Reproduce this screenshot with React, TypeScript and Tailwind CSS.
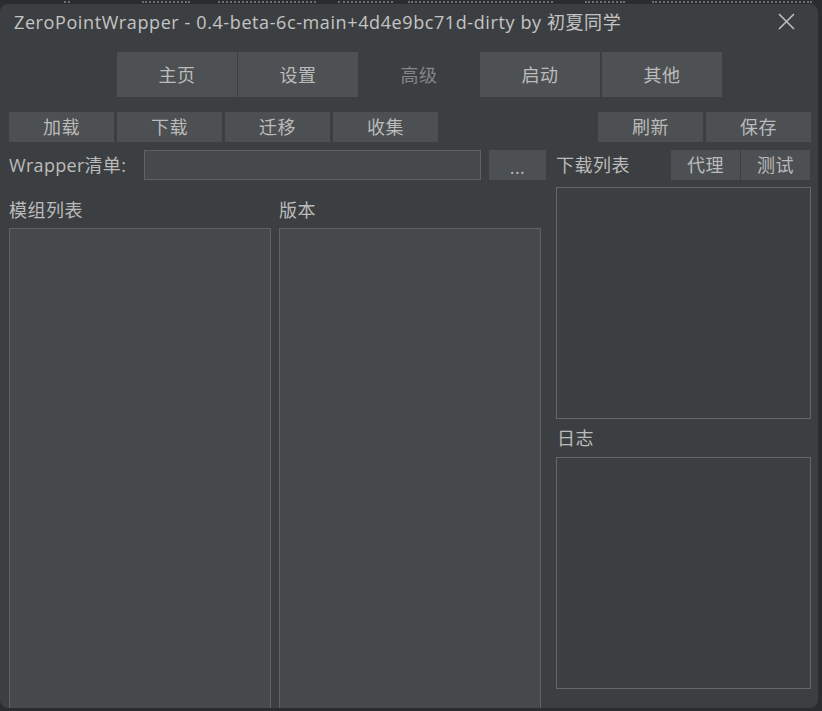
import React from "react";

const font = "font-['Open_Sans','Noto_Sans_CJK_SC',sans-serif]";

function Btn({ children, className = "" }: { children: React.ReactNode; className?: string }) {
  return (
    <div className={`flex items-center justify-center bg-[#4c5052] text-[#bbbbbb] text-[18px] tracking-[0.5px] ${className}`}>
      {children}
    </div>
  );
}

const segs: [number, number][] = [
  [64, 6],
  [142, 48],
  [218, 98],
  [338, 55],
  [408, 145],
  [585, 40],
  [652, 160],
];

export default function App() {
  return (
    <div className={`w-[822px] h-[711px] bg-[#2b2c2e] overflow-hidden ${font}`}>
      <div className="h-[4px] flex items-start">
        {segs.map(([x, w], i) => (
          <div
            key={i}
            className="mt-[1px] h-[2px] border-t-2 border-dotted border-[#6c6e70]"
            style={{ marginLeft: i === 0 ? x : x - (segs[i - 1][0] + segs[i - 1][1]), width: w }}
          />
        ))}
      </div>
      <div className="w-[818px] h-[704px] rounded-[8px] bg-[#3c3f41] overflow-hidden flex flex-col">
        {/* title bar */}
        <div className="h-[34px] flex items-center pl-[14px] pr-[23px]">
          <div className="flex-1 text-[18px] tracking-[0.6px] text-[#c4c4c4] leading-none pt-[1px] whitespace-nowrap">
            ZeroPointWrapper - 0.4-beta-6c-main+4d4e9bc71d-dirty by 初夏同学
          </div>
          <svg width="17" height="17" viewBox="0 0 17 17" className="mt-[1px]">
            <path d="M1 1 L16 16 M16 1 L1 16" stroke="#c0c0c0" strokeWidth="1.5" fill="none" />
          </svg>
        </div>

        {/* tabs */}
        <div className="mt-[14px] h-[45px] flex pl-[117px]">
          <Btn className="w-[120px] bg-[#4e5153] pt-[2px]">主页</Btn>
          <Btn className="w-[120px] ml-[1px] bg-[#4e5153] pt-[2px]">设置</Btn>
          <div className="w-[122px] pt-[2px] flex items-center justify-center text-[18px] tracking-[0.5px] text-[#848688]">高级</div>
          <Btn className="w-[120px] bg-[#4e5153] pt-[2px]">启动</Btn>
          <Btn className="w-[120px] ml-[2px] bg-[#4e5153] pt-[2px]">其他</Btn>
        </div>

        {/* action row */}
        <div className="mt-[15px] h-[30px] flex pl-[9px] pr-[7px]">
          <div className="flex gap-[3px]">
            <Btn className="w-[105px]">加载</Btn>
            <Btn className="w-[105px]">下载</Btn>
            <Btn className="w-[105px]">迁移</Btn>
            <Btn className="w-[105px]">收集</Btn>
          </div>
          <div className="flex-1" />
          <div className="flex gap-[3px]">
            <Btn className="w-[105px]">刷新</Btn>
            <Btn className="w-[105px]">保存</Btn>
          </div>
        </div>

        {/* wrapper row */}
        <div className="mt-[8px] h-[30px] flex items-center pl-[9px] pr-[7px]">
          <div className="w-[135px] text-[18px] tracking-[0.3px] text-[#bbbbbb] whitespace-nowrap">Wrapper清单:</div>
          <div className="w-[337px] h-[30px] bg-[#45494a] border border-[#5e6264]" />
          <Btn className="ml-[8px] w-[57px] h-[30px] pt-[4px]">...</Btn>
          <div className="ml-[10px] w-[115px] text-[18px] tracking-[0.5px] text-[#bbbbbb]">下载列表</div>
          <div className="flex gap-[1px]">
            <Btn className="w-[69px] h-[30px]">代理</Btn>
            <Btn className="w-[69px] h-[30px]">测试</Btn>
          </div>
        </div>

        {/* body */}
        <div className="flex-1 flex pl-[9px] pr-[7px] min-h-0">
          <div className="w-[532px] flex gap-[8px]">
            <div className="w-[262px] flex flex-col">
              <div className="h-[48px] flex items-end pb-[4px] text-[18px] tracking-[0.5px] text-[#bbbbbb]">模组列表</div>
              <div className="flex-1 bg-[#45494a] border border-b-0 border-[#5e6264]" />
            </div>
            <div className="w-[262px] flex flex-col">
              <div className="h-[48px] flex items-end pb-[4px] text-[18px] tracking-[0.5px] text-[#bbbbbb]">版本</div>
              <div className="flex-1 bg-[#45494a] border border-b-0 border-[#5e6264]" />
            </div>
          </div>
          <div className="ml-[15px] w-[255px] flex flex-col">
            <div className="mt-[7px] h-[232px] border border-[#646769]" />
            <div className="h-[38px] flex items-center pl-[1px] text-[18px] tracking-[0.5px] text-[#bbbbbb]">日志</div>
            <div className="h-[232px] border border-[#646769]" />
          </div>
        </div>
      </div>
    </div>
  );
}
